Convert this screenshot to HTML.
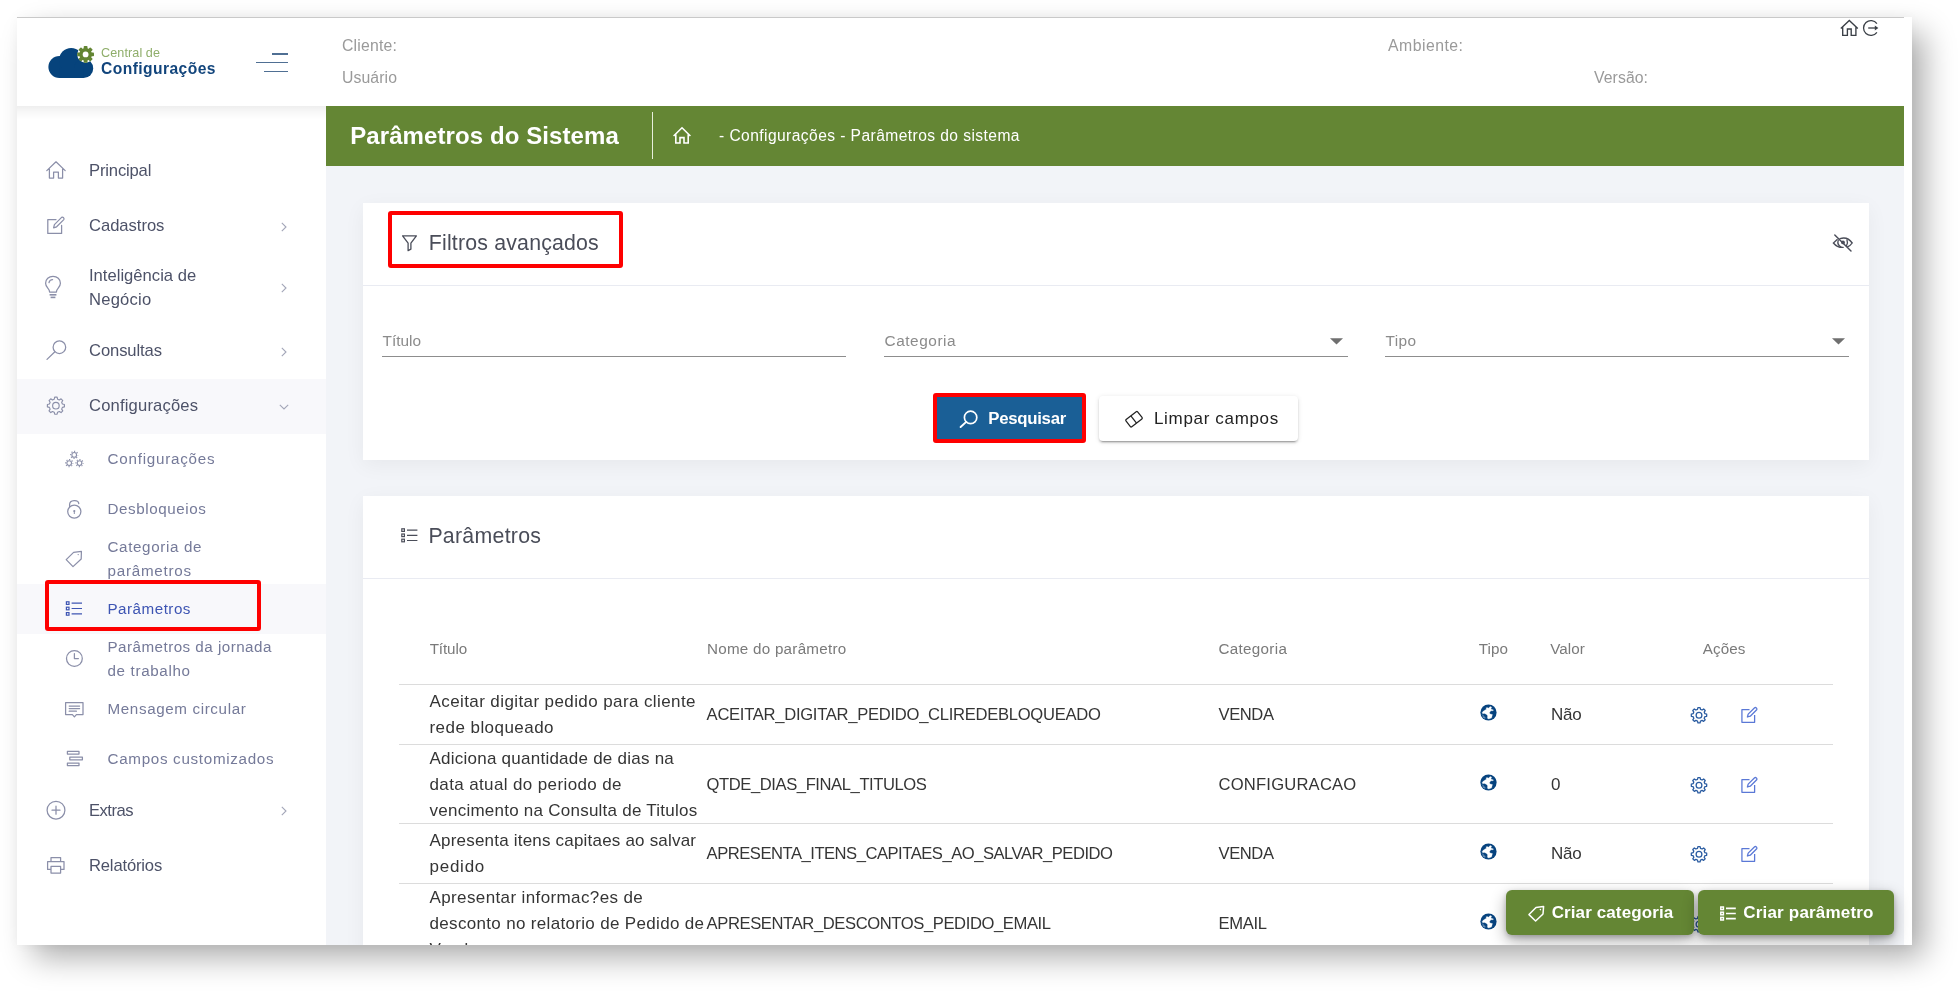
<!DOCTYPE html>
<html lang="pt-BR"><head><meta charset="utf-8"><title>Parâmetros do Sistema</title>
<style>
html,body{margin:0;padding:0;background:#fff;}
body{width:1960px;height:993px;position:relative;overflow:hidden;font-family:"Liberation Sans",sans-serif;}
.t{position:absolute;white-space:nowrap;line-height:1;}
.b{position:absolute;box-sizing:border-box;}
#shadow{position:absolute;left:17px;top:17px;width:1895px;height:928px;background:#fff;box-shadow:14px 14px 30px -2px rgba(0,0,0,0.335),0 0 12px rgba(0,0,0,0.03);}
#clip{position:absolute;left:17px;top:17px;width:1895px;height:928px;overflow:hidden;will-change:transform;}
#in{position:absolute;left:-17px;top:-17px;width:1960px;height:993px;}
</style></head><body>
<div id="shadow"></div>
<div id="clip"><div id="in">
<div class="b" style="left:17px;top:17px;width:1887px;height:1px;background:#c9c9c9"></div>
<div class="b" style="left:326px;top:106px;width:1578px;height:839px;background:#f2f4f8"></div>
<div class="b" style="left:1904px;top:18px;width:8px;height:927px;background:#fff"></div>
<div class="b" style="left:326px;top:106px;width:1578px;height:60px;background:#648634"></div>
<div class="b" style="left:17px;top:106px;width:309px;height:839px;background:#fff"></div>
<div class="b" style="left:17px;top:18px;width:309px;height:88px;background:#fff"></div>
<div class="b" style="left:17px;top:106px;width:309px;height:14px;background:linear-gradient(to bottom,rgba(0,0,0,0.065),rgba(0,0,0,0.03) 40%,rgba(0,0,0,0))"></div>
<div class="b" style="left:326px;top:18px;width:1578px;height:88px;background:#fff"></div>
<div class="b" style="left:363px;top:203px;width:1506px;height:257px;background:#fff;box-shadow:0 5px 20px rgba(0,0,0,0.05)"></div>
<div class="b" style="left:363px;top:496px;width:1506px;height:460px;background:#fff;box-shadow:0 5px 20px rgba(0,0,0,0.05)"></div>
<div class="b" style="left:363px;top:285px;width:1506px;height:1px;background:#e9ebf2"></div>
<div class="b" style="left:363px;top:578px;width:1506px;height:1px;background:#e9ebf2"></div>
<svg class="b" style="left:48px;top:44px;" width="48" height="36" viewBox="0 0 48 36">
<g fill="#06437c"><circle cx="11.4" cy="23" r="11"/><circle cx="23.2" cy="16.2" r="12.2"/><circle cx="35.6" cy="24.4" r="9.6"/><rect x="11.4" y="24" width="24.2" height="10"/></g>
<g transform="translate(37.6,10.4)">
<circle r="8.3" fill="#fff"/>
<g fill="#638533"><circle r="6.3"/>
<rect x="-1.9" y="-8.4" width="3.8" height="16.8" rx="0.8"/>
<rect x="-1.9" y="-8.4" width="3.8" height="16.8" rx="0.8" transform="rotate(45)"/>
<rect x="-1.9" y="-8.4" width="3.8" height="16.8" rx="0.8" transform="rotate(90)"/>
<rect x="-1.9" y="-8.4" width="3.8" height="16.8" rx="0.8" transform="rotate(135)"/>
</g><circle r="2.9" fill="#fff"/></g></svg>
<div class="t" style="left:101.0px;top:47.00px;font-size:12.60px;color:#8fae6a;letter-spacing:0.096px;">Central de</div>
<div class="t" style="left:101.0px;top:61.00px;font-size:15.60px;color:#12457c;font-weight:700;letter-spacing:0.440px;">Configurações</div>
<div class="b" style="left:272px;top:53px;width:16px;height:2px;background:#4f6f93"></div>
<div class="b" style="left:256px;top:62px;width:32px;height:1px;background:#4f6f93"></div>
<div class="b" style="left:264px;top:71px;width:24px;height:1px;background:#4f6f93"></div>
<div class="t" style="left:342.0px;top:38.00px;font-size:15.80px;color:#9a9a9a;letter-spacing:0.204px;">Cliente:</div>
<div class="t" style="left:342.0px;top:70.00px;font-size:15.80px;color:#9a9a9a;letter-spacing:0.093px;">Usuário</div>
<div class="t" style="left:1388.0px;top:38.00px;font-size:15.80px;color:#9a9a9a;letter-spacing:0.483px;">Ambiente:</div>
<div class="t" style="left:1594.0px;top:70.00px;font-size:15.80px;color:#9a9a9a;letter-spacing:0.070px;">Versão:</div>
<div class="t" style="left:350.2px;top:124.00px;font-size:24.00px;color:#fff;font-weight:700;letter-spacing:0.091px;">Parâmetros do Sistema</div>
<div class="b" style="left:652px;top:112px;width:1px;height:47px;background:#e8efdc"></div>
<svg class="b" style="left:671px;top:125px;" width="22" height="21" viewBox="0 0 22 21"><path d="M2.6 11 L11 2.8 L19.4 11 M4.8 9.6 V18 H9 V12.6 H13 V18 H17.2 V9.6" fill="none" stroke="#fff" stroke-width="1.6" stroke-linejoin="miter"/></svg>
<div class="t" style="left:719.0px;top:128.00px;font-size:15.60px;color:#fff;letter-spacing:0.427px;">- Configurações - Parâmetros do sistema</div>
<div class="b" style="left:17px;top:379px;width:309px;height:55px;background:#f8f8fb"></div>
<div class="b" style="left:17px;top:584px;width:309px;height:50px;background:#f8f8fb"></div>
<div class="t" style="left:89.0px;top:163.00px;font-size:16.60px;color:#4d5268;letter-spacing:-0.158px;">Principal</div>
<div class="t" style="left:89.0px;top:218.00px;font-size:16.60px;color:#4d5268;letter-spacing:-0.032px;">Cadastros</div>
<div class="t" style="left:89.0px;top:268.00px;font-size:16.60px;color:#4d5268;letter-spacing:0.010px;">Inteligência de</div>
<div class="t" style="left:89.0px;top:292.00px;font-size:16.60px;color:#4d5268;letter-spacing:0.216px;">Negócio</div>
<div class="t" style="left:89.0px;top:343.00px;font-size:16.60px;color:#4d5268;letter-spacing:-0.102px;">Consultas</div>
<div class="t" style="left:89.0px;top:398.00px;font-size:16.60px;color:#4d5268;letter-spacing:0.172px;">Configurações</div>
<div class="t" style="left:89.0px;top:803.00px;font-size:16.60px;color:#4d5268;letter-spacing:-0.509px;">Extras</div>
<div class="t" style="left:89.0px;top:858.00px;font-size:16.60px;color:#4d5268;letter-spacing:-0.170px;">Relatórios</div>
<div class="t" style="left:107.5px;top:451.00px;font-size:15.20px;color:#757a99;letter-spacing:0.766px;">Configurações</div>
<div class="t" style="left:107.5px;top:501.00px;font-size:15.20px;color:#757a99;letter-spacing:0.581px;">Desbloqueios</div>
<div class="t" style="left:107.5px;top:539.00px;font-size:15.20px;color:#757a99;letter-spacing:0.633px;">Categoria de</div>
<div class="t" style="left:107.5px;top:563.00px;font-size:15.20px;color:#757a99;letter-spacing:0.747px;">parâmetros</div>
<div class="t" style="left:107.5px;top:601.00px;font-size:15.20px;color:#3e55b3;letter-spacing:0.493px;">Parâmetros</div>
<div class="t" style="left:107.5px;top:639.00px;font-size:15.20px;color:#757a99;letter-spacing:0.469px;">Parâmetros da jornada</div>
<div class="t" style="left:107.5px;top:663.00px;font-size:15.20px;color:#757a99;letter-spacing:0.654px;">de trabalho</div>
<div class="t" style="left:107.5px;top:701.00px;font-size:15.20px;color:#757a99;letter-spacing:0.625px;">Mensagem circular</div>
<div class="t" style="left:107.5px;top:751.00px;font-size:15.20px;color:#757a99;letter-spacing:0.692px;">Campos customizados</div>
<svg class="b" style="left:280.5px;top:221.5px;" width="6" height="10" viewBox="0 0 6 10"><path d="M0.8 0.8 L5 5 L0.8 9.2" fill="none" stroke="#a3a6b8" stroke-width="1.1"/></svg>
<svg class="b" style="left:280.5px;top:283px;" width="6" height="10" viewBox="0 0 6 10"><path d="M0.8 0.8 L5 5 L0.8 9.2" fill="none" stroke="#a3a6b8" stroke-width="1.1"/></svg>
<svg class="b" style="left:280.5px;top:346.5px;" width="6" height="10" viewBox="0 0 6 10"><path d="M0.8 0.8 L5 5 L0.8 9.2" fill="none" stroke="#a3a6b8" stroke-width="1.1"/></svg>
<svg class="b" style="left:280.5px;top:806px;" width="6" height="10" viewBox="0 0 6 10"><path d="M0.8 0.8 L5 5 L0.8 9.2" fill="none" stroke="#a3a6b8" stroke-width="1.1"/></svg>
<svg class="b" style="left:278.5px;top:403.5px;" width="10" height="6" viewBox="0 0 10 6"><path d="M0.8 0.8 L5 5 L9.2 0.8" fill="none" stroke="#a3a6b8" stroke-width="1.1"/></svg>
<svg class="b" style="left:45px;top:160px;" width="22" height="20" viewBox="0 0 22 20"><path d="M1.8 10.6 L11 1.8 L20.2 10.6 M4.4 9 V18 H8.6 V12 H13.4 V18 H17.6 V9" fill="none" stroke="#8b8fa9" stroke-width="1.25" stroke-linejoin="round" stroke-linecap="round"/></svg>
<svg class="b" style="left:46px;top:216px;" width="20" height="19" viewBox="0 0 20 19"><path d="M10 3.6 H1.8 V17.4 H15.6 V9.4 M7.6 11.8 L8.4 8.6 L15.6 1.4 Q16.6 0.8 17.6 1.8 Q18.4 2.8 17.8 3.6 L10.6 10.8 Z" fill="none" stroke="#8b8fa9" stroke-width="1.25" stroke-linejoin="round" stroke-linecap="round"/></svg>
<svg class="b" style="left:44px;top:275px;" width="18" height="25" viewBox="0 0 18 25"><path d="M5.6 17 C5.6 13.6 1.6 12.6 1.6 8.2 C1.6 4.2 4.8 1.4 9 1.4 C13.2 1.4 16.4 4.2 16.4 8.2 C16.4 12.6 12.4 13.6 12.4 17 Z M5 7.6 C5.4 5.6 7 4.6 8.6 4.6" fill="none" stroke="#8b8fa9" stroke-width="1.25" stroke-linejoin="round" stroke-linecap="round"/><rect x="5.6" y="19" width="6.8" height="1.6" fill="#8b8fa9"/><rect x="6.6" y="21.6" width="4.8" height="1.6" fill="#8b8fa9"/></svg>
<svg class="b" style="left:45px;top:339px;" width="22" height="22" viewBox="0 0 22 22"><circle cx="14.4" cy="8.2" r="6.3" fill="none" stroke="#8b8fa9" stroke-width="1.25" stroke-linejoin="round" stroke-linecap="round"/><path d="M9.9 12.8 L2 20.4" fill="none" stroke="#8b8fa9" stroke-width="1.25" stroke-linejoin="round" stroke-linecap="round"/></svg>
<svg class="b" style="left:45px;top:395px;" width="22" height="22" viewBox="0 0 22 22"><path d="M9.69 2.19 L12.11 2.19 L12.57 4.20 L14.31 4.93 L16.06 3.82 L17.78 5.54 L16.67 7.29 L17.40 9.03 L19.41 9.49 L19.41 11.91 L17.40 12.37 L16.67 14.11 L17.78 15.86 L16.06 17.58 L14.31 16.47 L12.57 17.20 L12.11 19.21 L9.69 19.21 L9.23 17.20 L7.49 16.47 L5.74 17.58 L4.02 15.86 L5.13 14.11 L4.40 12.37 L2.39 11.91 L2.39 9.49 L4.40 9.03 L5.13 7.29 L4.02 5.54 L5.74 3.82 L7.49 4.93 L9.23 4.20 Z" fill="none" stroke="#8b8fa9" stroke-width="1.15" stroke-linejoin="round"/><circle cx="10.9" cy="10.7" r="3.27" fill="none" stroke="#8b8fa9" stroke-width="1.15"/></svg>
<svg class="b" style="left:64px;top:449px;" width="21" height="20" viewBox="0 0 21 20"><circle cx="10.2" cy="5.9" r="2.35" fill="none" stroke="#8b8fa9" stroke-width="1.1"/><circle cx="10.2" cy="5.9" r="3.6" fill="none" stroke="#8b8fa9" stroke-width="1.2" stroke-dasharray="1.15 1.677" stroke-dashoffset="0.57"/><circle cx="5.2" cy="14.1" r="2.35" fill="none" stroke="#8b8fa9" stroke-width="1.1"/><circle cx="5.2" cy="14.1" r="3.6" fill="none" stroke="#8b8fa9" stroke-width="1.2" stroke-dasharray="1.15 1.677" stroke-dashoffset="0.57"/><circle cx="15.5" cy="14.1" r="2.35" fill="none" stroke="#8b8fa9" stroke-width="1.1"/><circle cx="15.5" cy="14.1" r="3.6" fill="none" stroke="#8b8fa9" stroke-width="1.2" stroke-dasharray="1.15 1.677" stroke-dashoffset="0.57"/></svg>
<svg class="b" style="left:66px;top:499px;" width="17" height="21" viewBox="0 0 17 21"><circle cx="8.3" cy="12.6" r="6.6" fill="none" stroke="#8b8fa9" stroke-width="1.25" stroke-linejoin="round" stroke-linecap="round"/><path d="M3.6 8 V5.6 C3.6 0.4 12.4 0.4 12.8 4.6" fill="none" stroke="#8b8fa9" stroke-width="1.25" stroke-linejoin="round" stroke-linecap="round"/><circle cx="8.3" cy="12" r="1.1" fill="#8b8fa9"/><rect x="7.8" y="12" width="1" height="3" fill="#8b8fa9"/></svg>
<svg class="b" style="left:65px;top:550px;" width="18" height="18" viewBox="0 0 18 18"><path d="M1.2 9.6 L8.6 2.4 L16.4 1.4 L16.2 9 L8 16.6 Z" fill="none" stroke="#8b8fa9" stroke-width="1.25" stroke-linejoin="round" stroke-linecap="round"/><circle cx="13.2" cy="4.6" r="0.7" fill="#8b8fa9"/></svg>
<svg class="b" style="left:65px;top:600px;" width="18" height="17" viewBox="0 0 18 17"><g fill="none" stroke="#3e55b3" stroke-width="1.2"><rect x="1.4" y="1.8" width="2.6" height="2.6"/><rect x="1.4" y="7.2" width="2.6" height="2.6"/><rect x="1.4" y="12.6" width="2.6" height="2.6"/><path d="M6.6 3.1 H17 M6.6 8.5 H17 M6.6 13.9 H17"/></g></svg>
<svg class="b" style="left:65px;top:649px;" width="19" height="19" viewBox="0 0 19 19"><circle cx="9.4" cy="9.5" r="7.9" fill="none" stroke="#8b8fa9" stroke-width="1.25" stroke-linejoin="round" stroke-linecap="round"/><path d="M9.4 4.6 V9.6 H13.4" fill="none" stroke="#8b8fa9" stroke-width="1.25" stroke-linejoin="round" stroke-linecap="round"/></svg>
<svg class="b" style="left:64px;top:701px;" width="21" height="18" viewBox="0 0 21 18"><path d="M1.6 1.6 H19 V13.6 H12.4 L10.4 15.8 L8.4 13.6 H1.6 Z M5.2 5 H15.6 M5.2 7.6 H15.6 M5.2 10.2 H12.4" fill="none" stroke="#8b8fa9" stroke-width="1.25" stroke-linejoin="round" stroke-linecap="round"/></svg>
<svg class="b" style="left:66px;top:750px;" width="18" height="18" viewBox="0 0 18 18"><g fill="none" stroke="#8b8fa9" stroke-width="1.25" stroke-linejoin="round" stroke-linecap="round"><rect x="1.4" y="1.4" width="11.6" height="2.6"/><rect x="3.8" y="7.2" width="12.6" height="2.6"/><rect x="1.4" y="13" width="11.6" height="2.6"/></g></svg>
<svg class="b" style="left:45px;top:800px;" width="22" height="22" viewBox="0 0 22 22"><circle cx="11" cy="10.2" r="8.9" fill="none" stroke="#8b8fa9" stroke-width="1.25" stroke-linejoin="round" stroke-linecap="round"/><path d="M11 6.2 V14.2 M7 10.2 H15" fill="none" stroke="#8b8fa9" stroke-width="1.25" stroke-linejoin="round" stroke-linecap="round"/></svg>
<svg class="b" style="left:46px;top:856px;" width="20" height="19" viewBox="0 0 20 19"><path d="M5 5.6 V1.6 H14.6 V5.6 M5 13.4 H1.6 V5.6 H18 V13.4 H14.6 M5 10.4 H14.6 V17 H5 Z" fill="none" stroke="#8b8fa9" stroke-width="1.25" stroke-linejoin="round" stroke-linecap="round"/></svg>
<div class="b" style="left:45px;top:580px;width:216px;height:51px;border:4px solid #fe0000;border-radius:3px"></div>
<svg class="b" style="left:1838px;top:17px;" width="22" height="21" viewBox="0 0 22 21"><path d="M2.8 11.4 L11.3 3.4 L19.8 11.4 M4.7 10.2 V18.3 H9.4 V12 H13.2 V18.3 H17.9 V10.2" fill="none" stroke="#3a3f46" stroke-width="1.35" stroke-linejoin="miter"/></svg>
<svg class="b" style="left:1860px;top:18px;" width="22" height="21" viewBox="0 0 22 21"><path d="M16.9 5.6 A7.4 7.4 0 1 0 16.9 14.4" fill="none" stroke="#3a3f46" stroke-width="1.3"/><path d="M8.2 10 H16" stroke="#3a3f46" stroke-width="1.3"/><path d="M14.8 7.6 L18.4 10 L14.8 12.4 Z" fill="#3a3f46"/></svg>
<svg class="b" style="left:400px;top:233px;" width="20" height="20" viewBox="0 0 20 20"><path d="M2.6 2.8 H16.4 L10.9 10.2 V16.2 L8.1 17.6 V10.2 Z" fill="none" stroke="#4a4d59" stroke-width="1.3" stroke-linejoin="round"/></svg>
<div class="t" style="left:428.8px;top:233.00px;font-size:21.30px;color:#4a4d59;letter-spacing:0.192px;">Filtros avançados</div>
<div class="b" style="left:388px;top:211px;width:235px;height:57px;border:4px solid #fe0000;border-radius:3px"></div>
<svg class="b" style="left:1831px;top:232px;" width="24" height="22" viewBox="0 0 24 22"><g fill="none" stroke="#4a4d59" stroke-width="1.35" stroke-linecap="round"><path d="M6.2 7.6 L2.4 11 C5 14.2 8.4 15.6 12.2 15.4"/><path d="M9 6.6 C14 5 18.6 7.2 21.2 11 C20 12.8 18.4 14 16.6 14.8"/><path d="M7.2 8.4 C6.4 11 7.4 13.6 10 15"/><path d="M16 8 C16.8 10 16.6 12 15.4 13.8"/><path d="M3.8 3 L20 19" stroke-width="1.45"/></g><circle cx="12" cy="10.4" r="1.9" fill="#4a4d59"/></svg>
<div class="t" style="left:382.5px;top:333.00px;font-size:15.40px;color:#8b8b8b;letter-spacing:-0.003px;">Título</div>
<div class="t" style="left:884.5px;top:333.00px;font-size:15.40px;color:#8b8b8b;letter-spacing:0.553px;">Categoria</div>
<div class="t" style="left:1385.5px;top:333.00px;font-size:15.40px;color:#8b8b8b;letter-spacing:0.371px;">Tipo</div>
<div class="b" style="left:382px;top:356px;width:464px;height:1px;background:#8d8d8d"></div>
<div class="b" style="left:884px;top:356px;width:464px;height:1px;background:#8d8d8d"></div>
<div class="b" style="left:1385px;top:356px;width:464px;height:1px;background:#8d8d8d"></div>
<svg class="b" style="left:1330px;top:338px;" width="13" height="7" viewBox="0 0 13 7"><path d="M0 0.2 H13 L6.5 6.6 Z" fill="#6f6f6f"/></svg>
<svg class="b" style="left:1831.5px;top:338px;" width="13" height="7" viewBox="0 0 13 7"><path d="M0 0.2 H13 L6.5 6.6 Z" fill="#6f6f6f"/></svg>
<div class="b" style="left:934px;top:395px;width:151px;height:47px;background:#1a5f96;border-radius:3px"></div>
<div class="b" style="left:933px;top:393px;width:153px;height:50px;border:4px solid #fe0000;border-radius:3px"></div>
<svg class="b" style="left:958px;top:408px;" width="22" height="22" viewBox="0 0 22 22"><circle cx="12.6" cy="9.4" r="6.2" fill="none" stroke="#fff" stroke-width="1.7"/><path d="M8.2 13.9 L2.6 19" stroke="#fff" stroke-width="1.9" stroke-linecap="round"/></svg>
<div class="t" style="left:988.3px;top:411.00px;font-size:16.80px;color:#fff;font-weight:700;letter-spacing:-0.289px;">Pesquisar</div>
<div class="b" style="left:1099px;top:396px;width:199px;height:45px;background:#fff;border-radius:4px;box-shadow:0 3px 1px -2px rgba(0,0,0,.2),0 2px 2px 0 rgba(0,0,0,.14),0 1px 5px 0 rgba(0,0,0,.12)"></div>
<svg class="b" style="left:1124px;top:409px;" width="20" height="20" viewBox="0 0 20 20"><g transform="rotate(-38 10 10.2)" fill="none" stroke="#222" stroke-width="1.25" stroke-linejoin="round"><rect x="2.6" y="5.6" width="14.8" height="9.2" rx="1"/><path d="M9.6 5.6 V14.8"/></g></svg>
<div class="t" style="left:1154.0px;top:410.00px;font-size:17.00px;color:#222;letter-spacing:0.666px;">Limpar campos</div>
<svg class="b" style="left:400px;top:527px;" width="19" height="17" viewBox="0 0 19 17"><g fill="none" stroke="#4a4d59" stroke-width="1.2"><rect x="1.8" y="1.8" width="2.6" height="2.6"/><rect x="1.8" y="7" width="2.6" height="2.6"/><rect x="1.8" y="12.2" width="2.6" height="2.6"/><path d="M7 3.1 H17.4 M7 8.3 H17.4 M7 13.5 H17.4"/></g></svg>
<div class="t" style="left:428.4px;top:526.00px;font-size:21.30px;color:#4a4d59;letter-spacing:0.279px;">Parâmetros</div>
<div class="t" style="left:429.7px;top:641.00px;font-size:15.20px;color:#7a7a7a;letter-spacing:-0.103px;">Título</div>
<div class="t" style="left:707.0px;top:641.00px;font-size:15.20px;color:#7a7a7a;letter-spacing:0.258px;">Nome do parâmetro</div>
<div class="t" style="left:1218.5px;top:641.00px;font-size:15.20px;color:#7a7a7a;letter-spacing:0.312px;">Categoria</div>
<div class="t" style="left:1478.8px;top:641.00px;font-size:15.20px;color:#7a7a7a;letter-spacing:0.065px;">Tipo</div>
<div class="t" style="left:1550.2px;top:641.00px;font-size:15.20px;color:#7a7a7a;letter-spacing:0.061px;">Valor</div>
<div class="t" style="left:1702.7px;top:641.00px;font-size:15.20px;color:#7a7a7a;letter-spacing:0.139px;">Ações</div>
<div class="b" style="left:399px;top:684px;width:1434px;height:1px;background:#dcdcdc"></div>
<div class="b" style="left:399px;top:744px;width:1434px;height:1px;background:#dcdcdc"></div>
<div class="b" style="left:399px;top:823px;width:1434px;height:1px;background:#dcdcdc"></div>
<div class="b" style="left:399px;top:883px;width:1434px;height:1px;background:#dcdcdc"></div>
<div class="t" style="left:429.5px;top:693.00px;font-size:17.00px;color:#353535;letter-spacing:0.402px;">Aceitar digitar pedido para cliente</div>
<div class="t" style="left:429.5px;top:719.00px;font-size:17.00px;color:#353535;letter-spacing:0.449px;">rede bloqueado</div>
<div class="t" style="left:429.5px;top:750.00px;font-size:17.00px;color:#353535;letter-spacing:0.243px;">Adiciona quantidade de dias na</div>
<div class="t" style="left:429.5px;top:776.00px;font-size:17.00px;color:#353535;letter-spacing:0.375px;">data atual do periodo de</div>
<div class="t" style="left:429.5px;top:802.00px;font-size:17.00px;color:#353535;letter-spacing:0.245px;">vencimento na Consulta de Titulos</div>
<div class="t" style="left:429.5px;top:832.00px;font-size:17.00px;color:#353535;letter-spacing:0.201px;">Apresenta itens capitaes ao salvar</div>
<div class="t" style="left:429.5px;top:858.00px;font-size:17.00px;color:#353535;letter-spacing:0.750px;">pedido</div>
<div class="t" style="left:429.5px;top:889.00px;font-size:17.00px;color:#353535;letter-spacing:0.383px;">Apresentar informac?es de</div>
<div class="t" style="left:429.5px;top:915.00px;font-size:17.00px;color:#353535;letter-spacing:0.328px;">desconto no relatorio de Pedido de</div>
<div class="t" style="left:429.5px;top:941.00px;font-size:17.00px;color:#353535;">Venda</div>
<div class="t" style="left:706.6px;top:707.00px;font-size:16.60px;color:#353535;letter-spacing:-0.286px;">ACEITAR_DIGITAR_PEDIDO_CLIREDEBLOQUEADO</div>
<div class="t" style="left:1218.5px;top:707.00px;font-size:16.60px;color:#353535;letter-spacing:-0.423px;">VENDA</div>
<div class="t" style="left:1551.0px;top:706.00px;font-size:17.00px;color:#353535;letter-spacing:-0.293px;">Não</div>
<svg class="b" style="left:1480.4px;top:704.2px;" width="17" height="17" viewBox="0 0 17 17"><circle cx="8.5" cy="8.5" r="8.1" fill="#06437f"/>
<path d="M10.4 2.5 L11.7 3.2 L10.8 5 L13.6 6 L12.9 6.8 L10.9 6.7 L9.4 8.85 L10.1 9.9 L12.5 10.6 L11.5 14.1 L8.7 14.9 L7.4 14.3 L7.6 11.7 L6.2 10.3 L4.45 9.55 L2.7 9.7 L2.1 8.5 L3.2 7.2 L6.6 5 L5.9 3.9 L7.3 3.6 L8.3 4.2 L9.4 3.2 Z" fill="#fff" stroke="#fff" stroke-width="0.25" stroke-linejoin="round"/>
<path d="M2.2 10.6 L5.4 14.2 M2.9 12.6 L4.4 14.4" stroke="#fff" stroke-width="0.55" fill="none" opacity="0.85"/></svg>
<svg class="b" style="left:1688px;top:704px;" width="22" height="22" viewBox="0 0 22 22"><path d="M9.91 3.53 L12.09 3.53 L12.50 5.34 L14.08 6.00 L15.65 5.00 L17.20 6.55 L16.20 8.12 L16.86 9.70 L18.67 10.11 L18.67 12.29 L16.86 12.70 L16.20 14.28 L17.20 15.85 L15.65 17.40 L14.08 16.40 L12.50 17.06 L12.09 18.87 L9.91 18.87 L9.50 17.06 L7.92 16.40 L6.35 17.40 L4.80 15.85 L5.80 14.28 L5.14 12.70 L3.33 12.29 L3.33 10.11 L5.14 9.70 L5.80 8.12 L4.80 6.55 L6.35 5.00 L7.92 6.00 L9.50 5.34 Z" fill="none" stroke="#2c5da2" stroke-width="1.3" stroke-linejoin="round"/><circle cx="11" cy="11.2" r="2.87" fill="none" stroke="#2c5da2" stroke-width="1.3"/></svg>
<svg class="b" style="left:1740px;top:706.1px;" width="19" height="18" viewBox="0 0 20 19"><path d="M10 3.8 H2 V17.2 H15.4 V9.6 M7.8 11.6 L8.6 8.6 L15.4 1.8 Q16.4 1.2 17.4 2.2 Q18.2 3.2 17.6 4 L10.8 10.8 Z" fill="none" stroke="#5a78d6" stroke-width="1.35" stroke-linejoin="round"/></svg>
<div class="t" style="left:706.6px;top:777.00px;font-size:16.60px;color:#353535;letter-spacing:-0.422px;">QTDE_DIAS_FINAL_TITULOS</div>
<div class="t" style="left:1218.5px;top:777.00px;font-size:16.60px;color:#353535;letter-spacing:0.203px;">CONFIGURACAO</div>
<div class="t" style="left:1551.0px;top:776.00px;font-size:17.00px;color:#353535;">0</div>
<svg class="b" style="left:1480.4px;top:773.9px;" width="17" height="17" viewBox="0 0 17 17"><circle cx="8.5" cy="8.5" r="8.1" fill="#06437f"/>
<path d="M10.4 2.5 L11.7 3.2 L10.8 5 L13.6 6 L12.9 6.8 L10.9 6.7 L9.4 8.85 L10.1 9.9 L12.5 10.6 L11.5 14.1 L8.7 14.9 L7.4 14.3 L7.6 11.7 L6.2 10.3 L4.45 9.55 L2.7 9.7 L2.1 8.5 L3.2 7.2 L6.6 5 L5.9 3.9 L7.3 3.6 L8.3 4.2 L9.4 3.2 Z" fill="#fff" stroke="#fff" stroke-width="0.25" stroke-linejoin="round"/>
<path d="M2.2 10.6 L5.4 14.2 M2.9 12.6 L4.4 14.4" stroke="#fff" stroke-width="0.55" fill="none" opacity="0.85"/></svg>
<svg class="b" style="left:1688px;top:773.7px;" width="22" height="22" viewBox="0 0 22 22"><path d="M9.91 3.53 L12.09 3.53 L12.50 5.34 L14.08 6.00 L15.65 5.00 L17.20 6.55 L16.20 8.12 L16.86 9.70 L18.67 10.11 L18.67 12.29 L16.86 12.70 L16.20 14.28 L17.20 15.85 L15.65 17.40 L14.08 16.40 L12.50 17.06 L12.09 18.87 L9.91 18.87 L9.50 17.06 L7.92 16.40 L6.35 17.40 L4.80 15.85 L5.80 14.28 L5.14 12.70 L3.33 12.29 L3.33 10.11 L5.14 9.70 L5.80 8.12 L4.80 6.55 L6.35 5.00 L7.92 6.00 L9.50 5.34 Z" fill="none" stroke="#2c5da2" stroke-width="1.3" stroke-linejoin="round"/><circle cx="11" cy="11.2" r="2.87" fill="none" stroke="#2c5da2" stroke-width="1.3"/></svg>
<svg class="b" style="left:1740px;top:775.8px;" width="19" height="18" viewBox="0 0 20 19"><path d="M10 3.8 H2 V17.2 H15.4 V9.6 M7.8 11.6 L8.6 8.6 L15.4 1.8 Q16.4 1.2 17.4 2.2 Q18.2 3.2 17.6 4 L10.8 10.8 Z" fill="none" stroke="#5a78d6" stroke-width="1.35" stroke-linejoin="round"/></svg>
<div class="t" style="left:706.6px;top:846.00px;font-size:16.60px;color:#353535;letter-spacing:-0.485px;">APRESENTA_ITENS_CAPITAES_AO_SALVAR_PEDIDO</div>
<div class="t" style="left:1218.5px;top:846.00px;font-size:16.60px;color:#353535;letter-spacing:-0.423px;">VENDA</div>
<div class="t" style="left:1551.0px;top:845.00px;font-size:17.00px;color:#353535;letter-spacing:-0.293px;">Não</div>
<svg class="b" style="left:1480.4px;top:843.4px;" width="17" height="17" viewBox="0 0 17 17"><circle cx="8.5" cy="8.5" r="8.1" fill="#06437f"/>
<path d="M10.4 2.5 L11.7 3.2 L10.8 5 L13.6 6 L12.9 6.8 L10.9 6.7 L9.4 8.85 L10.1 9.9 L12.5 10.6 L11.5 14.1 L8.7 14.9 L7.4 14.3 L7.6 11.7 L6.2 10.3 L4.45 9.55 L2.7 9.7 L2.1 8.5 L3.2 7.2 L6.6 5 L5.9 3.9 L7.3 3.6 L8.3 4.2 L9.4 3.2 Z" fill="#fff" stroke="#fff" stroke-width="0.25" stroke-linejoin="round"/>
<path d="M2.2 10.6 L5.4 14.2 M2.9 12.6 L4.4 14.4" stroke="#fff" stroke-width="0.55" fill="none" opacity="0.85"/></svg>
<svg class="b" style="left:1688px;top:843.2px;" width="22" height="22" viewBox="0 0 22 22"><path d="M9.91 3.53 L12.09 3.53 L12.50 5.34 L14.08 6.00 L15.65 5.00 L17.20 6.55 L16.20 8.12 L16.86 9.70 L18.67 10.11 L18.67 12.29 L16.86 12.70 L16.20 14.28 L17.20 15.85 L15.65 17.40 L14.08 16.40 L12.50 17.06 L12.09 18.87 L9.91 18.87 L9.50 17.06 L7.92 16.40 L6.35 17.40 L4.80 15.85 L5.80 14.28 L5.14 12.70 L3.33 12.29 L3.33 10.11 L5.14 9.70 L5.80 8.12 L4.80 6.55 L6.35 5.00 L7.92 6.00 L9.50 5.34 Z" fill="none" stroke="#2c5da2" stroke-width="1.3" stroke-linejoin="round"/><circle cx="11" cy="11.2" r="2.87" fill="none" stroke="#2c5da2" stroke-width="1.3"/></svg>
<svg class="b" style="left:1740px;top:845.3px;" width="19" height="18" viewBox="0 0 20 19"><path d="M10 3.8 H2 V17.2 H15.4 V9.6 M7.8 11.6 L8.6 8.6 L15.4 1.8 Q16.4 1.2 17.4 2.2 Q18.2 3.2 17.6 4 L10.8 10.8 Z" fill="none" stroke="#5a78d6" stroke-width="1.35" stroke-linejoin="round"/></svg>
<div class="t" style="left:706.6px;top:916.00px;font-size:16.60px;color:#353535;letter-spacing:-0.397px;">APRESENTAR_DESCONTOS_PEDIDO_EMAIL</div>
<div class="t" style="left:1218.5px;top:916.00px;font-size:16.60px;color:#353535;letter-spacing:-0.304px;">EMAIL</div>
<svg class="b" style="left:1480.4px;top:912.9px;" width="17" height="17" viewBox="0 0 17 17"><circle cx="8.5" cy="8.5" r="8.1" fill="#06437f"/>
<path d="M10.4 2.5 L11.7 3.2 L10.8 5 L13.6 6 L12.9 6.8 L10.9 6.7 L9.4 8.85 L10.1 9.9 L12.5 10.6 L11.5 14.1 L8.7 14.9 L7.4 14.3 L7.6 11.7 L6.2 10.3 L4.45 9.55 L2.7 9.7 L2.1 8.5 L3.2 7.2 L6.6 5 L5.9 3.9 L7.3 3.6 L8.3 4.2 L9.4 3.2 Z" fill="#fff" stroke="#fff" stroke-width="0.25" stroke-linejoin="round"/>
<path d="M2.2 10.6 L5.4 14.2 M2.9 12.6 L4.4 14.4" stroke="#fff" stroke-width="0.55" fill="none" opacity="0.85"/></svg>
<svg class="b" style="left:1688px;top:912.7px;" width="22" height="22" viewBox="0 0 22 22"><path d="M9.91 3.53 L12.09 3.53 L12.50 5.34 L14.08 6.00 L15.65 5.00 L17.20 6.55 L16.20 8.12 L16.86 9.70 L18.67 10.11 L18.67 12.29 L16.86 12.70 L16.20 14.28 L17.20 15.85 L15.65 17.40 L14.08 16.40 L12.50 17.06 L12.09 18.87 L9.91 18.87 L9.50 17.06 L7.92 16.40 L6.35 17.40 L4.80 15.85 L5.80 14.28 L5.14 12.70 L3.33 12.29 L3.33 10.11 L5.14 9.70 L5.80 8.12 L4.80 6.55 L6.35 5.00 L7.92 6.00 L9.50 5.34 Z" fill="none" stroke="#2c5da2" stroke-width="1.3" stroke-linejoin="round"/><circle cx="11" cy="11.2" r="2.87" fill="none" stroke="#2c5da2" stroke-width="1.3"/></svg>
<svg class="b" style="left:1740px;top:914.8px;" width="19" height="18" viewBox="0 0 20 19"><path d="M10 3.8 H2 V17.2 H15.4 V9.6 M7.8 11.6 L8.6 8.6 L15.4 1.8 Q16.4 1.2 17.4 2.2 Q18.2 3.2 17.6 4 L10.8 10.8 Z" fill="none" stroke="#5a78d6" stroke-width="1.35" stroke-linejoin="round"/></svg>
<div class="b" style="left:1506px;top:890px;width:188px;height:45px;background:#648634;border-radius:6px;box-shadow:0 6px 16px rgba(0,0,0,.32),0 2px 5px rgba(0,0,0,.2)"></div>
<div class="b" style="left:1698.3px;top:890px;width:196px;height:45px;background:#648634;border-radius:6px;box-shadow:0 6px 16px rgba(0,0,0,.32),0 2px 5px rgba(0,0,0,.2)"></div>
<svg class="b" style="left:1527px;top:904px;" width="19" height="19" viewBox="0 0 19 19"><path d="M2 10.6 L9 3.4 L16.6 2.4 L16 10 L8.6 17 Z" fill="none" stroke="#fff" stroke-width="1.5" stroke-linejoin="round"/><circle cx="13.4" cy="5.6" r="0.8" fill="#fff"/></svg>
<div class="t" style="left:1551.7px;top:904.00px;font-size:17.00px;color:#fff;font-weight:700;letter-spacing:0.107px;">Criar categoria</div>
<svg class="b" style="left:1719px;top:904.5px;" width="18" height="17" viewBox="0 0 18 17"><g fill="none" stroke="#fff" stroke-width="1.5"><rect x="1.8" y="2" width="2.6" height="2.6"/><rect x="1.8" y="7.2" width="2.6" height="2.6"/><rect x="1.8" y="12.4" width="2.6" height="2.6"/><path d="M7 3.3 H16.8 M7 8.5 H16.8 M7 13.7 H16.8" stroke-width="1.7"/></g></svg>
<div class="t" style="left:1743.3px;top:904.00px;font-size:17.00px;color:#fff;font-weight:700;letter-spacing:0.189px;">Criar parâmetro</div>
</div></div>
</body></html>
